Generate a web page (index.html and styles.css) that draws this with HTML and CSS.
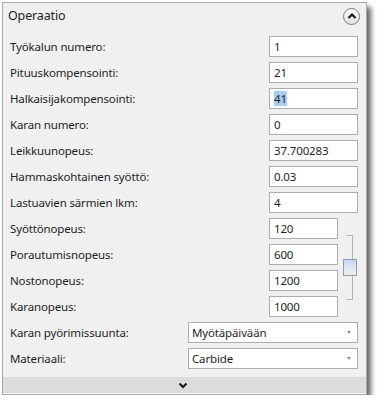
FILE: index.html
```html
<!DOCTYPE html>
<html>
<head>
<meta charset="utf-8">
<link rel="stylesheet" href="styles.css">
</head>
<body>
<div class="panel">
  <div class="header">
    <span class="title">Operaatio</span>
    <span class="circle-btn">
      <svg width="10" height="8" viewBox="0 0 10 8"><path d="M1.5 6 L5 2.5 L8.5 6" fill="none" stroke="#1a1a1a" stroke-width="2.2"/></svg>
    </span>
  </div>
  <div class="body">
    <div class="row"><span class="label">Työkalun numero:</span><span class="input">1</span></div>
    <div class="row"><span class="label">Pituuskompensointi:</span><span class="input">21</span></div>
    <div class="row"><span class="label">Halkaisijakompensointi:</span><span class="input"><span class="sel">41</span></span></div>
    <div class="row"><span class="label">Karan numero:</span><span class="input">0</span></div>
    <div class="row"><span class="label">Leikkuunopeus:</span><span class="input">37.700283</span></div>
    <div class="row"><span class="label">Hammaskohtainen syöttö:</span><span class="input">0.03</span></div>
    <div class="row"><span class="label">Lastuavien särmien lkm:</span><span class="input">4</span></div>
    <div class="group">
      <div class="group-rows">
        <div class="row"><span class="label">Syöttönopeus:</span><span class="input short">120</span></div>
        <div class="row"><span class="label">Porautumisnopeus:</span><span class="input short">600</span></div>
        <div class="row"><span class="label">Nostonopeus:</span><span class="input short">1200</span></div>
        <div class="row"><span class="label">Karanopeus:</span><span class="input short">1000</span></div>
      </div>
      <div class="bracket">
        <div class="bracket-line"></div>
        <div class="link-btn"></div>
      </div>
    </div>
    <div class="row combo-row"><span class="label">Karan pyörimissuunta:</span><span class="combo">Myötäpäivään<span class="arrow"></span></span></div>
    <div class="row combo-row"><span class="label">Materiaali:</span><span class="combo">Carbide<span class="arrow"></span></span></div>
  </div>
  <div class="footer">
    <svg width="10" height="7" viewBox="0 0 10 7"><path d="M1.5 1.5 L5 5 L8.5 1.5" fill="none" stroke="#1a1a1a" stroke-width="2.2"/></svg>
  </div>
</div>
</body>
</html>
```
FILE: styles.css
```css
html, body {
  margin: 0;
  padding: 0;
  background: #ffffff;
}
body {
  padding: 2px 0 0 2px;
  font-family: "Noto Sans", "Open Sans", sans-serif;
  font-size: 11.5px;
  letter-spacing: -0.15px;
  color: #1e1e1e;
}
.panel {
  width: 363px;
  height: 391px;
  border: 1px solid #a9a9a9;
  background: #f0f0f0;
  box-shadow: 4px 5px 5px rgba(0, 0, 0, 0.6);
  display: flex;
  flex-direction: column;
}
.header {
  height: 25px;
  display: flex;
  align-items: center;
  justify-content: space-between;
  padding: 0 6px 0 5px;
}
.title {
  font-size: 12.5px;
  margin-top: -1px;
}
.circle-btn {
  width: 15px;
  height: 15px;
  border: 1px solid #7a7a7a;
  border-radius: 50%;
  background: linear-gradient(#fafafa, #e2e2e2);
  display: flex;
  align-items: center;
  justify-content: center;
  margin-top: 1px;
}
.body {
  flex: 1;
  padding: 8px 8px 0 7px;
  display: flex;
  flex-direction: column;
  gap: 5px;
}
.row {
  height: 21px;
  display: flex;
  align-items: center;
  justify-content: space-between;
}
.label {
  white-space: nowrap;
}
.input {
  box-sizing: border-box;
  width: 89px;
  height: 21px;
  border: 1px solid #abadb3;
  background: #ffffff;
  padding: 0 0 0 4px;
  display: flex;
  align-items: center;
}
.input.short {
  width: 69px;
}
.sel {
  background: #a8cdf0;
}
.group {
  display: flex;
}
.group-rows {
  flex: 1;
  display: flex;
  flex-direction: column;
  gap: 5px;
}
.bracket {
  width: 20px;
  position: relative;
}
.bracket-line {
  position: absolute;
  left: 8px;
  top: 17px;
  width: 6px;
  height: 63px;
  border: 1px solid #b4b4b4;
  border-left: none;
}
.link-btn {
  position: absolute;
  left: 5px;
  top: 41px;
  width: 12px;
  height: 15px;
  border: 1px solid #8a9ab8;
  background: linear-gradient(#c6d6f0, #e4e8f0 60%, #f0eadc);
}
.combo {
  box-sizing: border-box;
  width: 170px;
  height: 21px;
  border: 1px solid #abadb3;
  background: #ffffff;
  padding: 0 0 0 3px;
  display: flex;
  align-items: center;
  position: relative;
}
.arrow {
  position: absolute;
  right: 6px;
  top: 8px;
  width: 0;
  height: 0;
  border-left: 2.5px solid transparent;
  border-right: 2.5px solid transparent;
  border-top: 3px solid #8a8a8a;
}
.footer {
  height: 16px;
  margin-top: 8px;
  background: #dcdcdc;
  border-bottom: 1px solid #f8f8f8;
  display: flex;
  align-items: center;
  justify-content: center;
  padding-right: 4px;
}
```
